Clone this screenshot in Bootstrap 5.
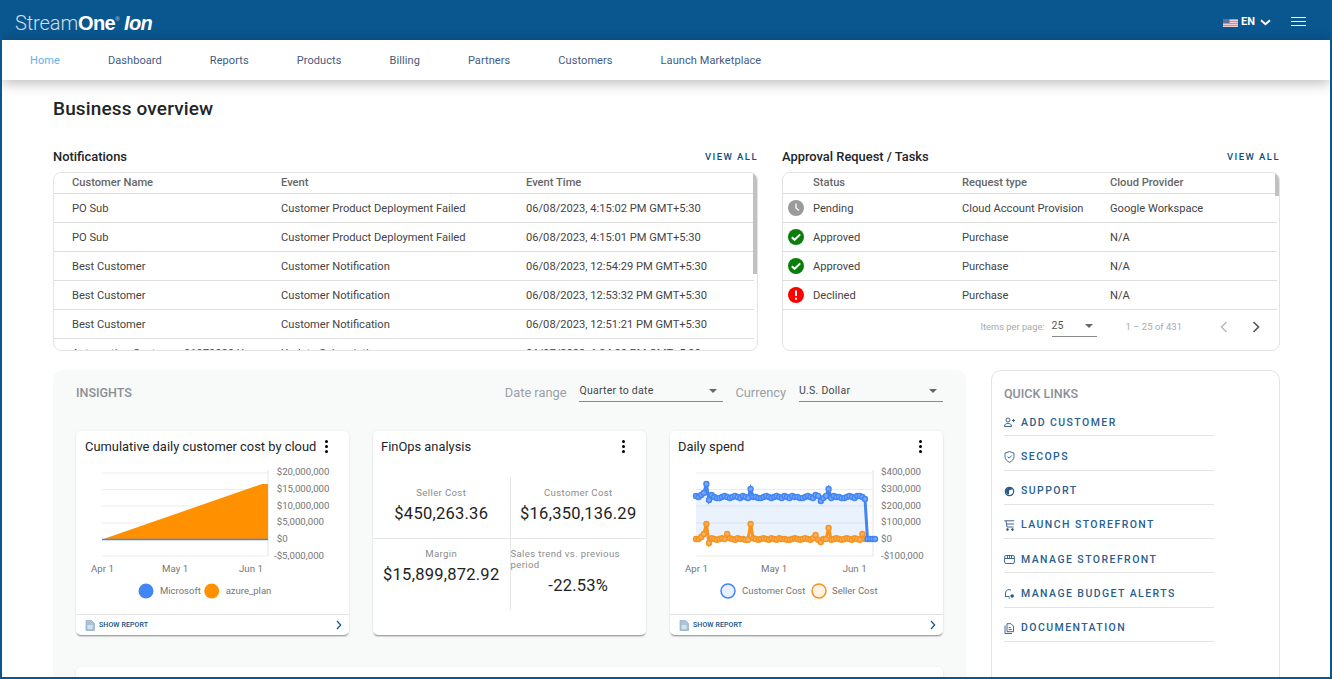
<!DOCTYPE html>
<html lang="en">
<head>
<meta charset="utf-8">
<title>StreamOne Ion</title>
<link href="https://cdn.jsdelivr.net/npm/bootstrap@5.3.0/dist/css/bootstrap.min.css" rel="stylesheet">
<style>
html,body{height:679px;overflow:hidden;margin:0;background:#fff;font-family:Roboto,"Liberation Sans",sans-serif;color:#333}
.frame{height:679px;overflow:hidden;border:solid #0a568f;border-width:0 2px 2px 2px;position:relative}
.topbar{height:40px;background:#0a568f;margin:0 -2px;padding:0 26px 0 15px}
.logo{font-family:"Liberation Sans",sans-serif;font-size:20px;color:#fff;letter-spacing:-.6px;line-height:40px;white-space:nowrap;padding-top:1px}
.logo-a{font-family:Roboto,sans-serif;font-weight:300;color:#d3dee8;letter-spacing:-.1px}
.logo-b{font-weight:700}
.logo-r{font-size:6px;vertical-align:9px;font-weight:400;color:#cfdbe6;margin-right:5px}
.logo-c{font-weight:700;font-style:italic}
.lang{font-size:11px;font-weight:700;color:#fff;gap:3px;margin-right:20px;margin-top:5px}
.chev{margin-left:2px}
.menu-bars{width:15px;height:9px;border-top:1px solid #fff;border-bottom:1px solid #fff;position:relative;margin-top:2px}
.menu-bars::after{content:"";position:absolute;left:0;right:0;top:3px;height:1px;background:#fff}
.mainnav{height:40px;padding:2px 0 0 28px;gap:48px;background:#fff;box-shadow:0 3px 14px rgba(0,0,0,.28);position:relative;z-index:2;font-size:11px}
.mainnav a{color:#3f5c80;text-decoration:none;letter-spacing:.08px}
.mainnav a.here{color:#5fb0ea}
.pagebody{padding:0 50px 0 51px}
.pagetitle{font-size:19px;font-weight:500;color:#212529;margin:0;padding-top:17px;height:56px;line-height:24px;letter-spacing:.15px}
.toprow{gap:24px;padding-top:0}
.leftcol{width:705px}
.rightcol{width:498px}
.sechead{height:22px;margin-top:10px;margin-bottom:4px}
.sectitle{font-size:12.9px;font-weight:500;color:#212529}
.viewall{font-size:9.5px;font-weight:500;letter-spacing:1.45px;color:#0a4f80;text-decoration:none}
.tablebox{height:179px;border:1px solid #e3e3e3;border-radius:8px;overflow:hidden;position:relative}
.datatable{table-layout:fixed;width:700px;margin:0;font-size:11.15px;color:#444}
.tablebox2 .datatable{width:494px}
.datatable th{height:20px;padding:1px 0 0;font-weight:500;color:#666;vertical-align:middle;border-bottom:1px solid #ddd;box-shadow:none}
.datatable td{height:29px;padding:4px 0 0;vertical-align:middle;border-bottom:1px solid #ddd;white-space:nowrap;color:#444;box-shadow:none}
.c-name{width:227px;padding-left:18px!important}
.c-event{width:245px}
.c-icon{width:30px;padding-left:5px!important;padding-top:1px!important}
.c-status{width:149px}
.c-req{width:148px}
.c-icon svg{display:block}
.thumb{position:absolute;top:0;right:0;width:4px;background:#c1c1c1}
.thumb1{height:101px}
.thumb2{height:23px}
.pager{height:35px;font-size:9.3px;color:#aaa;padding-right:19px}
.pg-size{width:45px;border-bottom:1px solid #888;color:#555;font-size:10.5px;height:20px;margin:0 29px 0 7px;padding-bottom:2px}
.caret{width:0;height:0;border:4px solid transparent;border-top:4px solid #666;border-bottom:0}
.pg-range{font-size:9.500px;margin-right:38px}
.lowrow{gap:25px;margin-top:19px}
.insights{width:913px;height:400px;background:#f8fafa;border-radius:10px;padding:0 23px}
.inshead{height:61px;padding-bottom:16px;padding-top:1px}
.institle{font-size:12.5px;font-weight:500;color:#8a8f94}
.filterlabel{font-size:12.8px;color:#9aa0a6}
.fakeselect{border-bottom:1px solid #8a8a8a;font-size:10.5px;color:#444;height:22px;padding:0 2px 0 0;width:144px;letter-spacing:.25px;margin:-4px 12px 0 13px}
.lastsel{margin-right:0}
.insightcards{gap:24px}
.infocard{width:273px;height:204px;border:0;border-radius:5px;background:#fff;box-shadow:0 2px 2px -1px rgba(0,0,0,.45),0 0 3px rgba(0,0,0,.07)}
.infocard2{width:273px}
.cardtop{height:31px;padding:0 0 0 8px;font-size:12.9px;color:#212529;line-height:31px;white-space:nowrap}
.infocard:first-child .cardtop{padding-left:9px}
.dots{width:3px;height:13px;flex:none;position:relative;margin-right:21px}
.dots i{display:block;width:3px;height:3px;border-radius:50%;background:#000;margin-bottom:2px}
.chartwrap{height:152px}
.chartwrap svg{display:block}
.cardfoot{height:21px;border-top:1px solid #e4e4e4;padding:0 7px 0 9px;font-size:7px;font-weight:500;color:#0a4f80;letter-spacing:.1px}
.fin-grid{display:grid;grid-template-columns:137.5px 135.5px;grid-template-rows:62px 71px;margin-top:15px}
.fin-cell{text-align:center;padding-top:10px}
.fin-cell1{border-right:1px solid #e6e6e6;border-bottom:1px solid #e6e6e6}
.fin-cell2{border-bottom:1px solid #e6e6e6}
.fin-cell3{border-right:1px solid #e6e6e6;padding-top:9px}
.fin-cell4{padding-top:9px}
.fin-label{font-size:9.6px;color:#8c8c8c;letter-spacing:.35px;line-height:11px}
.fin-value{font-size:16.5px;color:#222;letter-spacing:.25px;margin-top:6px;line-height:20px}
.fin-left{text-align:left}
.fin-value2{text-align:center;margin-top:6px}
.widecard{width:867px;height:60px;background:#fff;border-radius:5px 5px 0 0;margin-top:32px;box-shadow:0 1px 3px rgba(0,0,0,.12)}
.quick{width:289px;height:320px;border:1px solid #e3e3e3;border-radius:10px;padding:15px 12px}
.quicktitle{font-size:12.5px;font-weight:500;color:#8a8f94;height:16px;line-height:16px}
.qlist{width:210px}
.qitem{height:34.3px;border-bottom:1px solid #e3e3e3;color:#2a5f8e;font-size:10.5px;font-weight:500;letter-spacing:1.43px;text-decoration:none;gap:6px;padding-top:7.6px}
.qitem svg{flex:none}
</style>
</head>
<body>
<div class="frame">
  <header class="topbar d-flex align-items-center justify-content-between">
    <div class="logo"><span class="logo-a">Stream</span><span class="logo-b">One</span><span class="logo-r">®</span><span class="logo-c">Ion</span></div>
    <div class="d-flex align-items-center">
      <div class="lang d-flex align-items-center">
        <svg width="15" height="8" viewBox="0 0 15 8"><rect width="15" height="8" fill="#dc8a90"/><path d="M0 1.5h15M0 3.5h15M0 5.5h15M0 7.5h15" stroke="#f0d6d8" stroke-width=".9"/><rect width="6.5" height="4" fill="#5d6ea0"/></svg>
        <span>EN</span>
        <svg class="chev" width="11" height="7" viewBox="0 0 11 7"><path d="M1 1.2l4.5 4 4.5-4" fill="none" stroke="#fff" stroke-width="2"/></svg>
      </div>
      <div class="menu-bars"></div>
    </div>
  </header>
  <nav class="mainnav d-flex align-items-center">
    <a class="here" href="#">Home</a><a href="#">Dashboard</a><a href="#">Reports</a><a href="#">Products</a><a href="#">Billing</a><a href="#">Partners</a><a href="#">Customers</a><a href="#">Launch Marketplace</a>
  </nav>
  <main class="pagebody">
    <h1 class="pagetitle">Business overview</h1>
    <div class="d-flex toprow">
      <section class="leftcol">
        <div class="sechead d-flex justify-content-between align-items-center"><span class="sectitle">Notifications</span><a class="viewall" href="#">VIEW ALL</a></div>
        <div class="tablebox">
          <table class="table datatable">
            <thead><tr><th class="c-name">Customer Name</th><th class="c-event">Event</th><th>Event Time</th></tr></thead>
            <tbody>
              <tr><td class="c-name">PO Sub</td><td>Customer Product Deployment Failed</td><td>06/08/2023, 4:15:02 PM GMT+5:30</td></tr>
              <tr><td class="c-name">PO Sub</td><td>Customer Product Deployment Failed</td><td>06/08/2023, 4:15:01 PM GMT+5:30</td></tr>
              <tr><td class="c-name">Best Customer</td><td>Customer Notification</td><td>06/08/2023, 12:54:29 PM GMT+5:30</td></tr>
              <tr><td class="c-name">Best Customer</td><td>Customer Notification</td><td>06/08/2023, 12:53:32 PM GMT+5:30</td></tr>
              <tr><td class="c-name">Best Customer</td><td>Customer Notification</td><td>06/08/2023, 12:51:21 PM GMT+5:30</td></tr>
              <tr><td class="c-name">Automation Customer 91979080 U</td><td>Update Subscription</td><td>06/07/2023, 6:34:28 PM GMT+5:30</td></tr>
            </tbody>
          </table>
          <div class="thumb thumb1"></div>
        </div>
      </section>
      <section class="rightcol">
        <div class="sechead d-flex justify-content-between align-items-center"><span class="sectitle">Approval Request / Tasks</span><a class="viewall" href="#">VIEW ALL</a></div>
        <div class="tablebox tablebox2">
          <table class="table datatable">
            <thead><tr><th class="c-icon"></th><th class="c-status">Status</th><th class="c-req">Request type</th><th>Cloud Provider</th></tr></thead>
            <tbody>
              <tr><td class="c-icon"><svg width="16" height="16" viewBox="0 0 16 16"><circle cx="8" cy="8" r="8" fill="#9b9b9b"/><path d="M8 3.5V8l3 2.5" fill="none" stroke="#fff" stroke-width="1.3"/></svg></td><td>Pending</td><td>Cloud Account Provision</td><td>Google Workspace</td></tr>
              <tr><td class="c-icon"><svg width="16" height="16" viewBox="0 0 16 16"><circle cx="8" cy="8" r="8" fill="#0a7d0a"/><path d="M3.8 8.2l2.8 2.6 5.6-5.4" fill="none" stroke="#fff" stroke-width="2"/></svg></td><td>Approved</td><td>Purchase</td><td>N/A</td></tr>
              <tr><td class="c-icon"><svg width="16" height="16" viewBox="0 0 16 16"><circle cx="8" cy="8" r="8" fill="#0a7d0a"/><path d="M3.8 8.2l2.8 2.6 5.6-5.4" fill="none" stroke="#fff" stroke-width="2"/></svg></td><td>Approved</td><td>Purchase</td><td>N/A</td></tr>
              <tr><td class="c-icon"><svg width="16" height="16" viewBox="0 0 16 16"><circle cx="8" cy="8" r="8" fill="#f00"/><path d="M8 3.5v5.5M8 10.8v2" stroke="#fff" stroke-width="2"/></svg></td><td>Declined</td><td>Purchase</td><td>N/A</td></tr>
            </tbody>
          </table>
          <div class="pager d-flex align-items-center justify-content-end">
            <span>Items per page:</span>
            <div class="pg-size d-flex align-items-center justify-content-between"><span>25</span><i class="caret me-1"></i></div>
            <span class="pg-range">1 – 25 of 431</span>
            <svg class="me-4" width="8" height="12" viewBox="0 0 8 12"><path d="M6.5 1L1.5 6l5 5" fill="none" stroke="#bbb" stroke-width="1.6"/></svg>
            <svg width="8" height="12" viewBox="0 0 8 12"><path d="M1.5 1l5 5-5 5" fill="none" stroke="#555" stroke-width="1.6"/></svg>
          </div>
          <div class="thumb thumb2"></div>
        </div>
      </section>
    </div>
    <div class="d-flex lowrow">
      <section class="insights">
        <div class="inshead d-flex align-items-center">
          <span class="institle me-auto">INSIGHTS</span>
          <span class="filterlabel">Date range</span>
          <div class="fakeselect d-flex align-items-center justify-content-between"><span>Quarter to date</span><i class="caret me-1"></i></div>
          <span class="filterlabel">Currency</span>
          <div class="fakeselect lastsel d-flex align-items-center justify-content-between"><span>U.S. Dollar</span><i class="caret me-1"></i></div>
        </div>
        <div class="d-flex insightcards">
          <div class="card infocard">
            <div class="cardtop d-flex justify-content-between align-items-center"><span>Cumulative daily customer cost by cloud</span><span class="dots"><i></i><i></i><i></i></span></div>
            <div class="chartwrap">
              <svg width="273" height="152" viewBox="0 0 273 152" font-family="Roboto,sans-serif" font-size="9.700" fill="#757575">
                <path d="M26 11H192M26 27.500H192M26 44H192M26 61H192M26 94H192" stroke="#ececec"/>
                <path d="M192 8V94" stroke="#e4e4e4"/>
                <path d="M26 77.500L186 22H192V77.500Z" fill="#ff9100"/>
                <path d="M26 77.500H192" stroke="#4285f4" stroke-width="1.5"/>
                <text x="200.700" y="13">$20,000,000</text><text x="200.700" y="29.500">$15,000,000</text><text x="200.700" y="46.500">$10,000,000</text><text x="200.700" y="63">$5,000,000</text><text x="200.700" y="80">$0</text><text x="198" y="97">-$5,000,000</text>
                <text x="15" y="110">Apr 1</text><text x="86" y="110">May 1</text><text x="163" y="110">Jun 1</text>
                <circle cx="70" cy="129" r="7.500" fill="#4285f4"/><text x="84" y="132" font-size="9.500">Microsoft</text>
                <circle cx="135.700" cy="129" r="7.500" fill="#ff9100"/><text x="149.700" y="132" font-size="9.500">azure_plan</text>
              </svg>
            </div>
            <div class="cardfoot d-flex align-items-center">
              <svg class="me-1" width="10" height="11" viewBox="0 0 10 11"><path d="M1 .5h5.500L9.500 3.500V10.500H1z" fill="#a9c3d8" stroke="#7fa3bf" stroke-width=".6"/><path d="M2.500 6h5M2.500 8h5" stroke="#fff"/></svg>
              <span>SHOW REPORT</span>
              <svg class="ms-auto" width="6" height="10" viewBox="0 0 6 10"><path d="M1 1l3.700 4L1 9" fill="none" stroke="#0a568f" stroke-width="1.200"/></svg>
            </div>
          </div>
          <div class="card infocard infocard2">
            <div class="cardtop d-flex justify-content-between align-items-center"><span>FinOps analysis</span><span class="dots"><i></i><i></i><i></i></span></div>
            <div class="fin-grid">
              <div class="fin-cell fin-cell1"><div class="fin-label">Seller Cost</div><div class="fin-value">$450,263.36</div></div>
              <div class="fin-cell fin-cell2"><div class="fin-label">Customer Cost</div><div class="fin-value">$16,350,136.29</div></div>
              <div class="fin-cell fin-cell3"><div class="fin-label">Margin</div><div class="fin-value">$15,899,872.92</div></div>
              <div class="fin-cell fin-cell4 fin-left"><div class="fin-label">Sales trend vs. previous period</div><div class="fin-value fin-value2">-22.53%</div></div>
            </div>
          </div>
          <div class="card infocard">
            <div class="cardtop d-flex justify-content-between align-items-center"><span>Daily spend</span><span class="dots"><i></i><i></i><i></i></span></div>
            <div class="chartwrap">
              <svg id="spend" width="273" height="152" viewBox="0 0 273 152" font-family="Roboto,sans-serif" font-size="9.700" fill="#757575">
                <path d="M26 11H203M26 27.500H203M26 44H203M26 61H203M26 77.500H203M26 94H203" stroke="#ececec"/>
                <path d="M203 8V94" stroke="#e4e4e4"/>
                <g id="spendplot"></g>
                <text x="211" y="13">$400,000</text><text x="211" y="29.500">$300,000</text><text x="211" y="46.500">$200,000</text><text x="211" y="63">$100,000</text><text x="211" y="80">$0</text><text x="211" y="97">-$100,000</text>
                <text x="15" y="110">Apr 1</text><text x="91" y="110">May 1</text><text x="172.700" y="110">Jun 1</text>
                <circle cx="58" cy="129" r="7" fill="#e8f0fe" stroke="#4285f4" stroke-width="1.500"/><text x="72" y="132" font-size="9.500">Customer Cost</text>
                <circle cx="149" cy="129" r="7" fill="#fff3e6" stroke="#f7931e" stroke-width="1.500"/><text x="162" y="132" font-size="9.500">Seller Cost</text>
              </svg>
            </div>
            <div class="cardfoot d-flex align-items-center">
              <svg class="me-1" width="10" height="11" viewBox="0 0 10 11"><path d="M1 .5h5.500L9.500 3.500V10.500H1z" fill="#a9c3d8" stroke="#7fa3bf" stroke-width=".6"/><path d="M2.500 6h5M2.500 8h5" stroke="#fff"/></svg>
              <span>SHOW REPORT</span>
              <svg class="ms-auto" width="6" height="10" viewBox="0 0 6 10"><path d="M1 1l3.700 4L1 9" fill="none" stroke="#0a568f" stroke-width="1.200"/></svg>
            </div>
          </div>
        </div>
        <div class="widecard"></div>
      </section>
      <aside class="quick">
        <div class="quicktitle">QUICK LINKS</div>
        <div class="qlist">
          <a class="qitem d-flex align-items-center" href="#"><svg width="11" height="11" viewBox="0 0 11 11" fill="none" stroke="#2a5a88" stroke-width=".9"><circle cx="4" cy="3" r="2"/><path d="M.5 9.500c0-2.500 1.500-3 3.500-3s3.500.5 3.500 3z"/><path d="M8 3.500h3M9.500 2v3"/></svg><span>ADD CUSTOMER</span></a>
          <a class="qitem d-flex align-items-center" href="#"><svg width="11" height="12" viewBox="0 0 11 12" fill="none" stroke="#2a5a88" stroke-width=".9"><path d="M5.500 .6l4.500 1.500v3.500c0 2.700-2 4.500-4.500 5.700C3 10.100 1 8.300 1 5.600V2.100z"/><path d="M3.500 5.600l1.600 1.600 2.600-2.700"/></svg><span>SECOPS</span></a>
          <a class="qitem d-flex align-items-center" href="#"><svg width="11" height="11" viewBox="0 0 11 11"><circle cx="5.500" cy="5.500" r="4.200" fill="none" stroke="#2a5a88" stroke-width="1.200"/><path d="M1.500 5.500a4 4 0 0 1 7-2.500L5 4.500V8.500A4 4 0 0 1 1.500 5.500z" fill="#2a5a88"/></svg><span>SUPPORT</span></a>
          <a class="qitem d-flex align-items-center" href="#"><svg width="11" height="11" viewBox="0 0 11 11" fill="none" stroke="#2a5a88" stroke-width=".9"><path d="M.3 .8h10M2 .8l1 6.200h6.500M2.500 4h7.500"/><circle cx="3.500" cy="9.500" r=".9" fill="#2a5a88"/><circle cx="8.500" cy="9.500" r=".9" fill="#2a5a88"/></svg><span>LAUNCH STOREFRONT</span></a>
          <a class="qitem d-flex align-items-center" href="#"><svg width="11" height="11" viewBox="0 0 11 11" fill="none" stroke="#2a5a88" stroke-width=".9"><rect x=".6" y="1.500" width="9.800" height="8" rx="1.500"/><path d="M.6 4.500h9.800M3.500 1.500v3M5.500 1.500v3M7.500 1.500v3"/></svg><span>MANAGE STOREFRONT</span></a>
          <a class="qitem d-flex align-items-center" href="#"><svg width="11" height="11" viewBox="0 0 11 11" fill="none" stroke="#2a5a88" stroke-width=".9"><path d="M1.500 8.500V5a3.500 3.500 0 0 1 5.500-2.800M1 8.500h4.500M4.500 10h1.500"/><circle cx="8.200" cy="8" r="1.800" fill="#2a5a88" stroke="none"/></svg><span>MANAGE BUDGET ALERTS</span></a>
          <a class="qitem d-flex align-items-center" href="#"><svg width="11" height="11" viewBox="0 0 11 11" fill="none" stroke="#2a5a88" stroke-width=".9"><path d="M1 2.500V10.500H8M3 .7h4l2.500 2.500v5.500H3z"/><path d="M4.700 6.500h3M4.700 4.500h2"/></svg><span>DOCUMENTATION</span></a>
        </div>
      </aside>
    </div>
  </main>
</div>
<script>
(function(){
  var n=66, step=(195-26)/(n-1), blue=[], orange=[];
  var wob=[0,1,-1,0,1,-1,0,0,1,1,0,-1,0,1,0,-1];
  for(var i=0;i<n;i++){
    var x=26+i*step;
    blue.push([x,35+wob[i%16]*1.1]);
    orange.push([x,77+wob[(i+5)%16]*.7]);
  }
  [[0,34],[1,35],[2,33],[3,31],[4,22],[5,38],[6,33],[21,27],[46,33],[48,39],[51,27],[62,34],[65,37]].forEach(function(p){blue[p[0]][1]=p[1];});
  [[0,77],[1,77],[2,75],[3,72],[4,62],[5,81],[12,72],[21,62],[46,73],[48,80],[51,66],[64,72]].forEach(function(p){orange[p[0]][1]=p[1];});
  [197.5,200,202.5,205].forEach(function(v){blue.push([v,77]);});
  var ns="http://www.w3.org/2000/svg", g=document.getElementById("spendplot");
  function s(pts){return pts.map(function(p){return p[0].toFixed(1)+","+p[1];}).join(" ");}
  function el(name,attrs){var e=document.createElementNS(ns,name);for(var a in attrs){e.setAttribute(a,attrs[a]);}g.appendChild(e);}
  el("polygon",{points:s(blue)+" 26,77",fill:"#4285f4","fill-opacity":".11",stroke:"none"});
  el("polyline",{points:s(orange),fill:"none",stroke:"#f7931e","stroke-width":"3"});
  orange.forEach(function(p){el("circle",{cx:p[0],cy:p[1],r:2.5,fill:"#f9b066",stroke:"#f7931e","stroke-width":"1.4"});});
  el("polyline",{points:s(blue),fill:"none",stroke:"#4285f4","stroke-width":"3"});
  blue.forEach(function(p){el("circle",{cx:p[0],cy:p[1],r:2.5,fill:"#7aa8f6",stroke:"#4285f4","stroke-width":"1.4"});});
})();
</script>
</body>
</html>
